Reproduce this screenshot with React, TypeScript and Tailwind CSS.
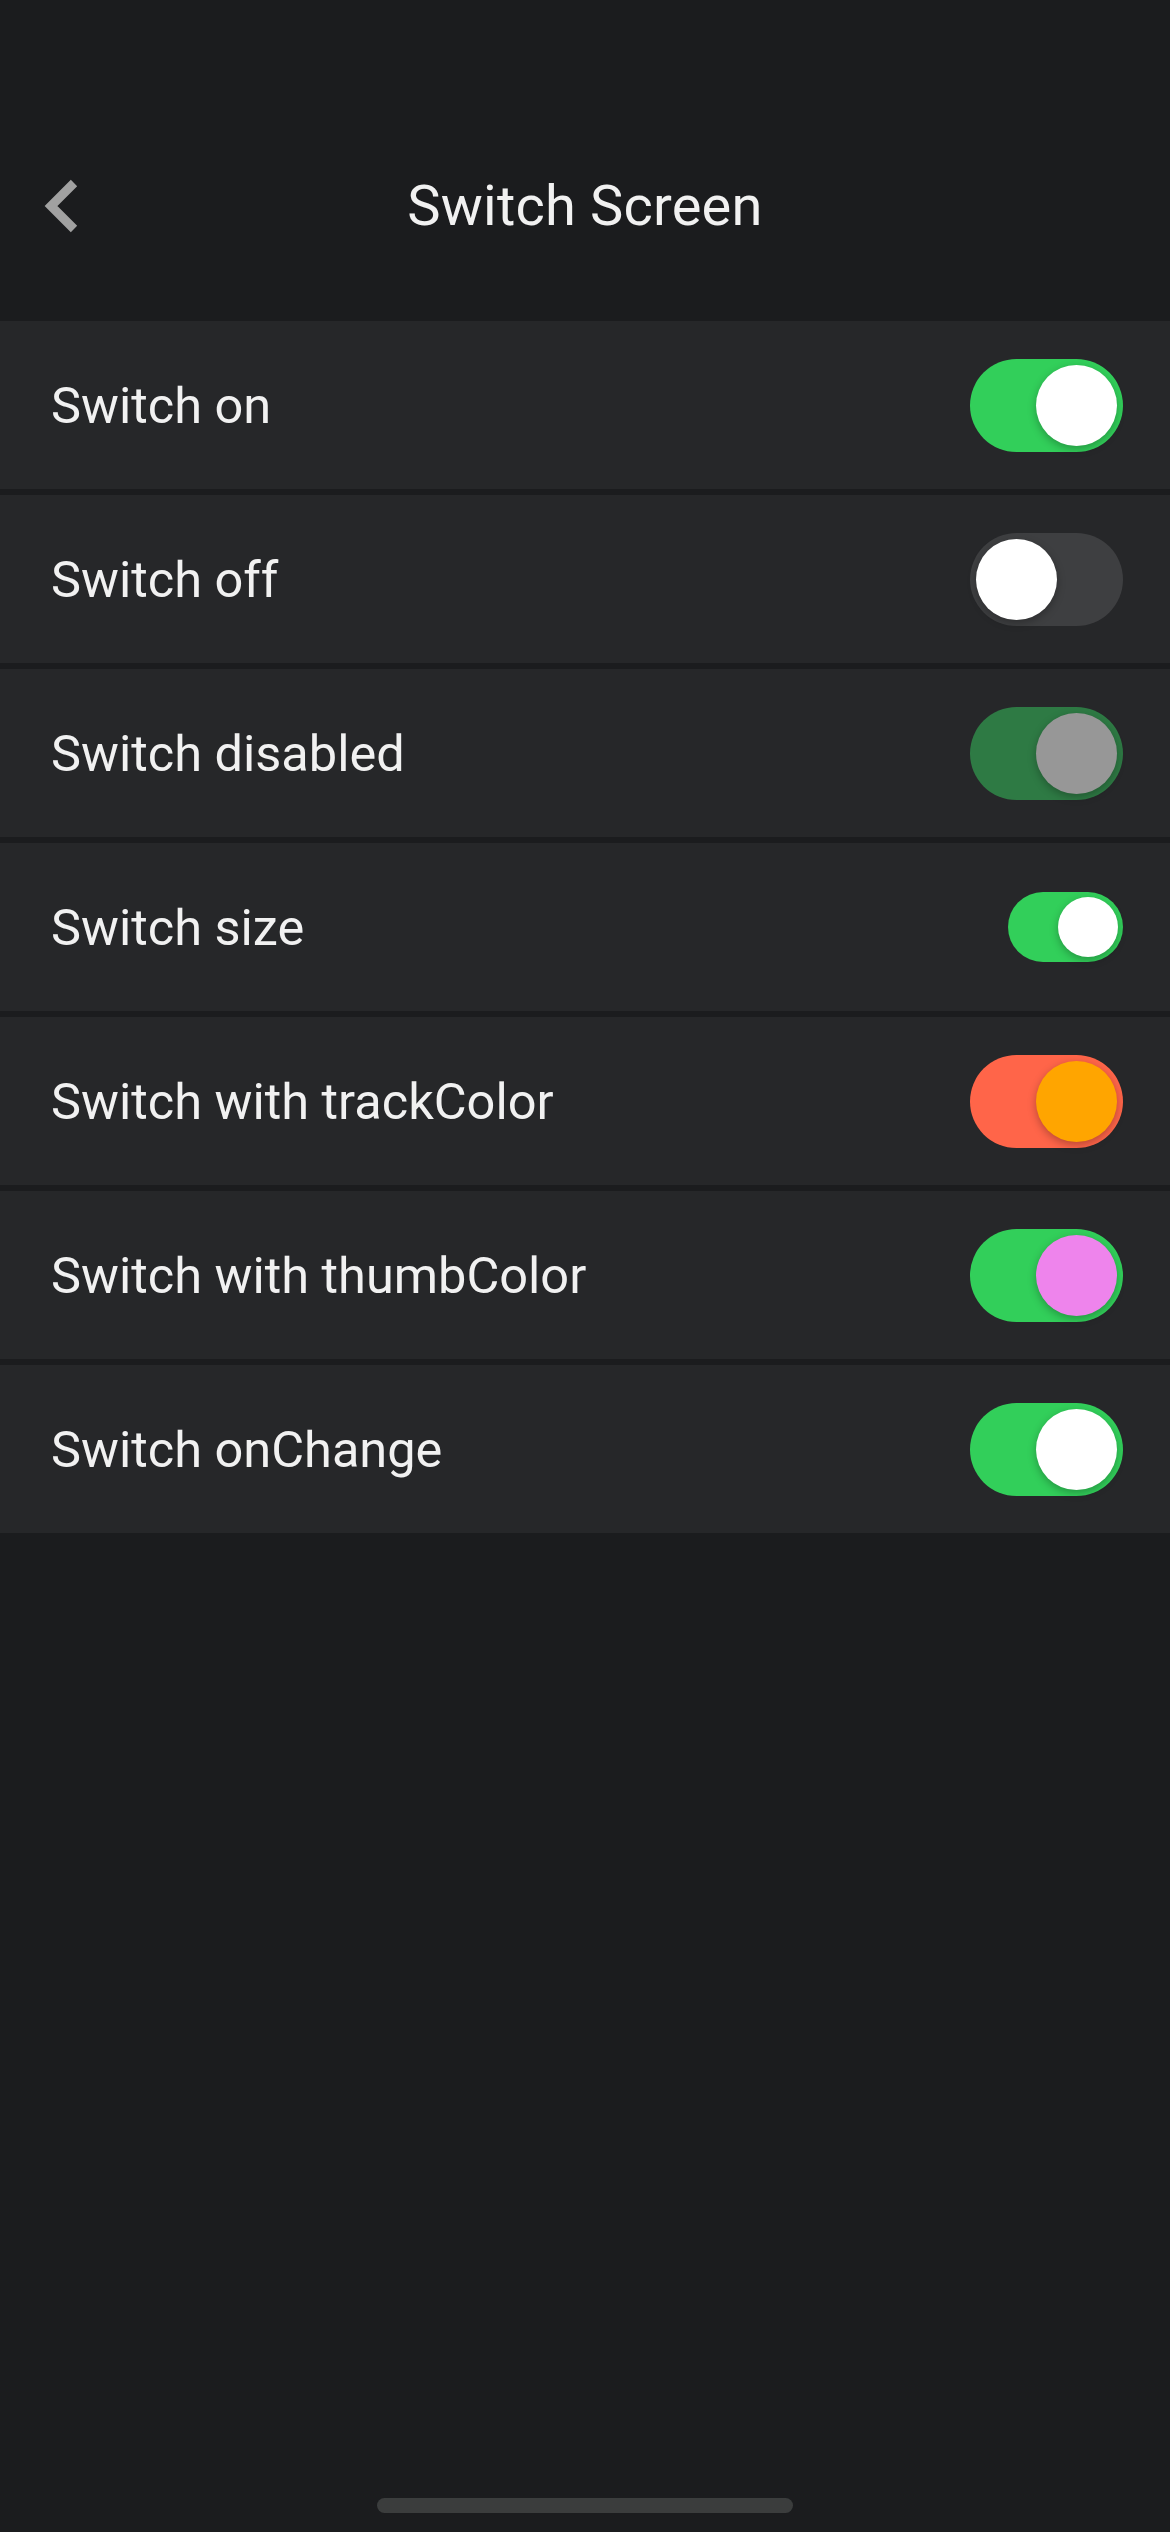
import React from 'react';

type SwitchProps = {
  on: boolean;
  track: string;
  thumb: string;
  small?: boolean;
};

const Toggle: React.FC<SwitchProps> = ({ on, track, thumb, small }) => {
  return (
    <div
      className={`flex items-center rounded-full ${on ? 'justify-end' : 'justify-start'} ${
        small ? 'w-[115px] h-[70px] px-[5px]' : 'w-[153px] h-[93px] px-[6px]'
      } ${track}`}
    >
      <div
        className={`rounded-full shadow-[0_3px_8px_rgba(0,0,0,0.28)] ${small ? 'w-[60px] h-[60px]' : 'w-[81px] h-[81px]'} ${thumb}`}
      />
    </div>
  );
};

const App: React.FC = () => {
  // rows shown on the screen, top to bottom
  const rows = [
    { label: 'Switch on', on: true, track: 'bg-[#32cf5a]', thumb: 'bg-white' },
    { label: 'Switch off', on: false, track: 'bg-[#3e3f41]', thumb: 'bg-white' },
    { label: 'Switch disabled', on: true, track: 'bg-[#2e7a44]', thumb: 'bg-[#979797]' },
    { label: 'Switch size', on: true, track: 'bg-[#32cf5a]', thumb: 'bg-white', small: true },
    { label: 'Switch with trackColor', on: true, track: 'bg-[#ff6549]', thumb: 'bg-[#ffa500]' },
    { label: 'Switch with thumbColor', on: true, track: 'bg-[#32cf5a]', thumb: 'bg-[#ee84ec]' },
    { label: 'Switch onChange', on: true, track: 'bg-[#32cf5a]', thumb: 'bg-white' },
  ];

  return (
    <div
      className="min-h-[2532px] w-full bg-[#1b1c1e] flex flex-col text-[#f1f1f1]"
      style={{ fontFamily: 'Roboto, "Noto Sans", sans-serif' }}
    >
      {/* Status bar area */}
      <div className="h-[140px]" />

      {/* Nav bar */}
      <div className="h-[132px] grid grid-cols-[1fr_auto_1fr] items-center">
        <div className="pl-[41px] flex items-center">
          <svg width="40" height="60" viewBox="0 0 40 60" fill="none">
            <path d="M33 7 L10 30 L33 53" stroke="#a1a1a1" strokeWidth="9" strokeLinejoin="miter" />
          </svg>
        </div>
        <h1 className="text-[56px] leading-none font-normal tracking-[0.2px]">Switch Screen</h1>
        <div />
      </div>

      {/* List */}
      <div className="pt-[49px] flex flex-col gap-[6px]">
        {rows.map((row, index) => (
          <div key={index} className="h-[168px] bg-[#262729] flex items-center justify-between pl-[51px] pr-[47px]">
            <span className="text-[50.5px] leading-[1.172] translate-y-[1px]">{row.label}</span>
            <Toggle on={row.on} track={row.track} thumb={row.thumb} small={row.small} />
          </div>
        ))}
      </div>

      {/* Home indicator */}
      <div className="mt-auto mb-[19px] self-center w-[416px] h-[15px] rounded-full bg-[#3b3d3d]" />
    </div>
  );
};

export default App;
